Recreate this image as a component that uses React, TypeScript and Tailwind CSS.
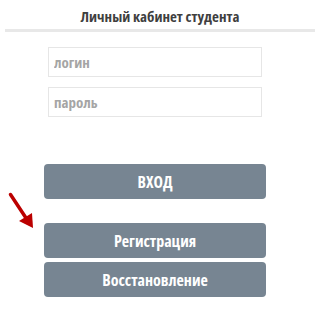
import React from 'react';

const BUTTONS = ["ВХОД", "Регистрация", "Восстановление"];

const App = () => {
    return (
        <div className="relative w-[320px] h-[314px] bg-white font-['Open_Sans',sans-serif]">
            <h1 className="h-[29px] pt-[6px] text-center text-[15px] leading-[20px] font-bold text-[#3f3f3f] [font-stretch:75%]">
                Личный кабинет студента
            </h1>
            <div className="mx-[5px] h-[3px] bg-[#e8e8e8]" />

            {/* fields */}
            <div className="mt-[15px] ml-[48px] w-[214px] flex flex-col gap-[10px]">
                <input
                    placeholder="логин"
                    className="h-[30px] px-[5px] border border-[#e6e6e6] text-[15px] font-bold [font-stretch:75%] placeholder:text-[#a5a5a5] outline-none"
                />
                <input
                    placeholder="пароль"
                    className="h-[30px] px-[5px] border border-[#e6e6e6] text-[15px] font-bold [font-stretch:75%] placeholder:text-[#a5a5a5] outline-none"
                />
            </div>

            {/* buttons */}
            <div className="mt-[47px] ml-[44px] w-[222px] flex flex-col">
                {BUTTONS.map((b, i) => (
                    <button
                        key={i}
                        className={`h-[35px] rounded-[4px] bg-[#778592] text-white text-[16px] font-bold [font-stretch:75%] ${i === 1 ? 'mt-[24px]' : i === 2 ? 'mt-[4px]' : ''}`}
                    >
                        {b}
                    </button>
                ))}
            </div>

            {/* red arrow */}
            <svg className="absolute left-[6px] top-[190px]" width="32" height="42" viewBox="0 0 32 42">
                <line x1="4.5" y1="4.5" x2="20" y2="28" stroke="#bb0000" strokeWidth="3.5" strokeLinecap="round" />
                <polygon points="27,38 13,31 26,23" fill="#bb0000" />
            </svg>
        </div>
    );
};
export default App;
